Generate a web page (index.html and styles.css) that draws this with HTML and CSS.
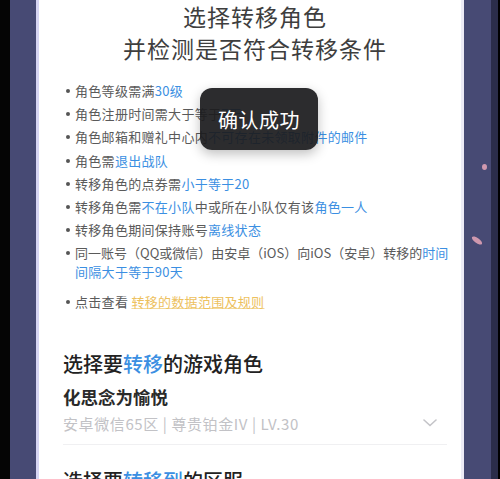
FILE: index.html
```html
<!DOCTYPE html>
<html lang="zh-CN">
<head>
    <meta charset="UTF-8">
    <meta name="viewport" content="width=device-width, initial-scale=1.0">
    <title>角色转移</title>
    <link rel="stylesheet" href="styles.css">
</head>
<body>
    <div class="frame">
        <div class="edge-dark"></div>
        <div class="side"></div>

        <!-- 主面板 -->
        <div class="panel">
            <h1 class="title">选择转移角色<br>并检测是否符合转移条件</h1>

            <ul class="rules">
                <li>角色等级需满<span class="hl">30级</span></li>
                <li>角色注册时间需大于等于<span class="hl">7天</span></li>
                <li>角色邮箱和赠礼中心内<span class="hl">不可存在未领取附件的邮件</span></li>
                <li>角色需<span class="hl">退出战队</span></li>
                <li>转移角色的点券需<span class="hl">小于等于20</span></li>
                <li>转移角色需<span class="hl">不在小队</span>中或所在小队仅有该<span class="hl">角色一人</span></li>
                <li>转移角色期间保持账号<span class="hl">离线状态</span></li>
                <li><span class="nowrap">同一账号（QQ或微信）由安卓（iOS）向iOS（安卓）转移的<span class="hl">时间</span></span><br><span class="hl">间隔大于等于90天</span></li>
                <li class="more">点击查看 <a class="link">转移的数据范围及规则</a></li>
            </ul>

            <h2 class="section">选择要<span class="hl">转移</span>的游戏角色</h2>
            <div class="role">
                <div class="role-info">
                    <div class="role-name">化思念为愉悦</div>
                    <div class="role-meta">安卓微信65区 | 尊贵铂金IV | LV.30</div>
                </div>
                <svg class="chevron" width="14" height="8" viewBox="0 0 14 8">
                    <path d="M1 1 L7 6.5 L13 1" fill="none" stroke="#c4c4c8" stroke-width="1.6" stroke-linecap="round"/>
                </svg>
            </div>

            <h2 class="section">选择要<span class="hl">转移到</span>的区服</h2>

            <!-- 提示框 -->
            <div class="toast">确认成功</div>
        </div>

        <div class="side side-right">
            <span class="petal petal-a"></span>
            <span class="petal petal-b"></span>
        </div>
        <div class="edge-right"></div>
    </div>
</body>
</html>
```

FILE: styles.css
```css
* {
    margin: 0;
    padding: 0;
    box-sizing: border-box;
}

body {
    width: 500px;
    height: 479px;
    overflow: hidden;
    background: #000;
    font-family: "Noto Sans CJK SC", "Noto Sans", sans-serif;
}

.frame {
    display: flex;
    height: 479px;
}

.edge-dark {
    width: 10px;
    background: #050505;
}

.side {
    width: 26px;
    background: #474a74;
    position: relative;
}

.side-right {
    width: 27px;
}

.edge-right {
    width: 7px;
    background: #2b2d4a;
}

/* 樱花花瓣 */
.petal {
    position: absolute;
    background: #e7a6b8;
    border-radius: 50%;
    opacity: 0.85;
}

.petal-a {
    left: 18px;
    top: 164px;
    width: 5px;
    height: 6px;
}

.petal-b {
    left: 7px;
    top: 238px;
    width: 12px;
    height: 5px;
    transform: rotate(35deg);
}

.panel {
    position: relative;
    width: 428px;
    background: #fff;
    border-left: 3px solid #d6d5f3;
    border-right: 3px solid #ecebf6;
    padding: 0 14px 0 24px;
    color: #5a5a5a;
}

.title {
    text-align: center;
    font-size: 23px;
    font-weight: 400;
    line-height: 32px;
    color: #3e3e3e;
    letter-spacing: 1px;
}

.rules {
    list-style: none;
    margin-top: 17px;
    padding-left: 12px;
    font-size: 13px;
    line-height: 19px;
    letter-spacing: 0.3px;
}

.rules li {
    position: relative;
    margin-bottom: 4.2px;
}

.rules li::before {
    content: "";
    position: absolute;
    left: -9px;
    top: 8px;
    width: 4px;
    height: 4px;
    border-radius: 50%;
    background: #555;
}

.rules li.more {
    margin-top: 11px;
}

.nowrap {
    white-space: nowrap;
    letter-spacing: 0;
}

.hl {
    color: #3b8fe2;
}

.link {
    color: #edc15e;
    text-decoration: underline;
    text-decoration-color: #f3d998;
}

.section {
    margin-top: 39px;
    font-size: 20px;
    font-weight: 500;
    line-height: 28px;
    color: #222;
}

.role {
    display: flex;
    align-items: center;
    justify-content: space-between;
    margin-top: 7px;
    padding-bottom: 10px;
    border-bottom: 1px solid #f0f0f2;
    margin-bottom: 22px;
}

.role + .section {
    margin-top: 0;
}

.role-name {
    font-size: 17.5px;
    font-weight: 700;
    line-height: 24px;
    color: #2a2a2a;
}

.role-meta {
    margin-top: 5px;
    font-size: 15px;
    line-height: 20px;
    letter-spacing: 0.6px;
    color: #c2c2c6;
}

.chevron {
    margin-right: 10px;
    margin-top: 26px;
}

.toast {
    position: absolute;
    left: 161px;
    top: 88px;
    width: 118px;
    height: 62px;
    display: flex;
    align-items: center;
    justify-content: center;
    background: rgba(28, 28, 30, 0.93);
    border-radius: 12px;
    box-shadow: 0 4px 12px rgba(0, 0, 0, 0.25);
    color: #fff;
    font-size: 20px;
    letter-spacing: 0.5px;
}
```
